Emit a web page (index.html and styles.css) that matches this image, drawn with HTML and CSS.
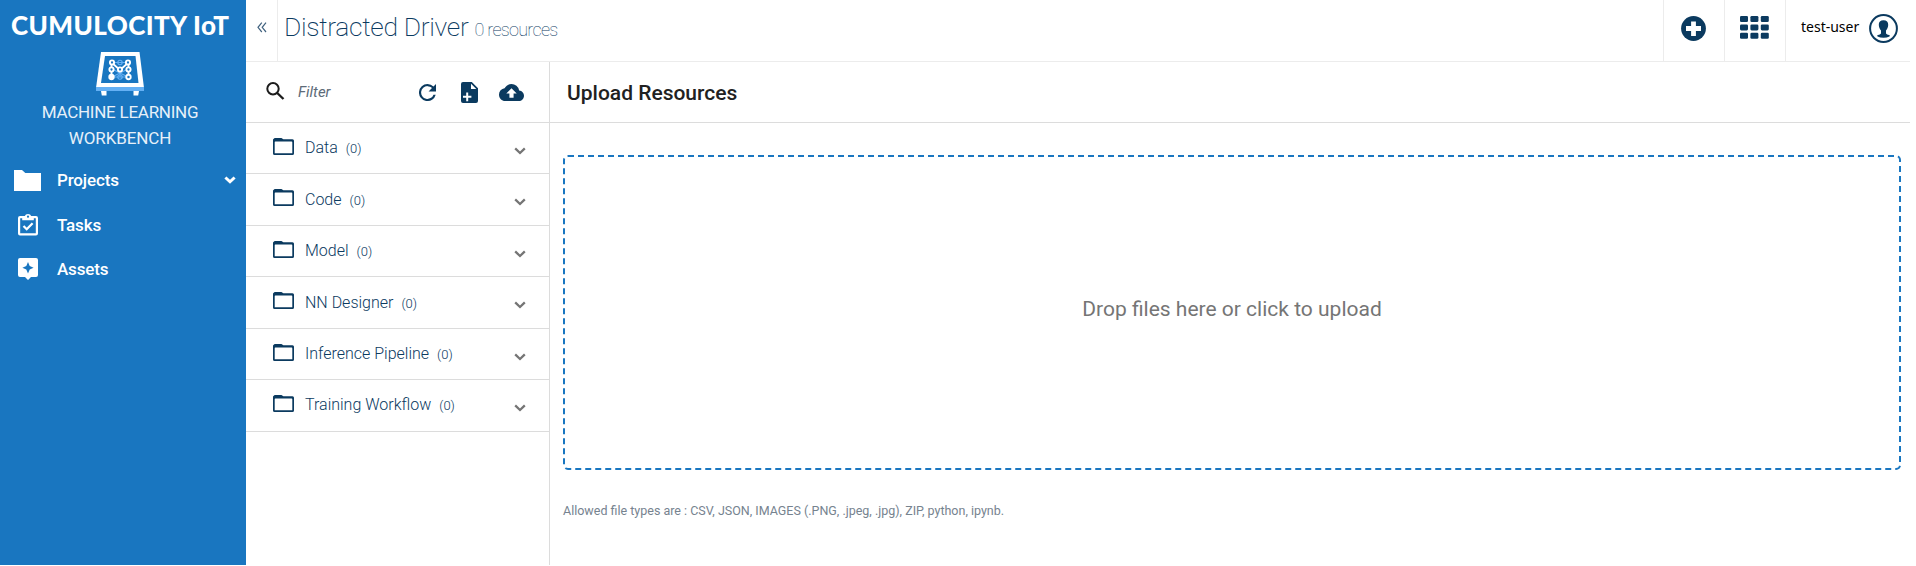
FILE: index.html
```html
<!DOCTYPE html>
<html lang="en">
<head>
<meta charset="utf-8">
<title>Machine Learning Workbench</title>
<link rel="stylesheet" href="styles.css">
</head>
<body>
<svg width="0" height="0" class="defs">
  <symbol id="folder" viewBox="0 0 21 17"><path d="M1 0.6Q1 0 2 0H8.4L10.4 1.2H19.5Q21 1.2 21 2.7V15.4Q21 17 19.4 17H1.6Q0 17 0 15.4V1.5ZM1.7 4.4V15.2H19.3V4.4Q19.3 3.6 18.6 3.6H2.3Q1.7 3.6 1.7 4.4Z" fill="currentColor" fill-rule="evenodd"/></symbol>
  <symbol id="chev" viewBox="0 0 12 8"><path d="M1.2 1.4L6 6L10.8 1.4" fill="none" stroke="currentColor" stroke-width="2.3"/></symbol>
  <symbol id="chev-bold" viewBox="0 0 12 8"><path d="M1.4 1.5L6 5.8L10.6 1.5" fill="none" stroke="currentColor" stroke-width="3"/></symbol>
</svg>
<div class="app">
  <aside class="sidebar">
    <div class="logo">CUMULOCITY IoT</div>
    <svg class="board" width="50" height="45" viewBox="0 0 50 45">
      <path d="M6 0H44.5L49 36H1Z" fill="#fff"/>
      <path d="M10 4H40.5L43.5 31H6Z" fill="#1976c0"/>
      <path d="M1 35H49V39H1Z" fill="#64b0f4"/>
      <path d="M6 39H11.5V43.5H6.8ZM38.5 39H44L43.2 43.5H38.5Z" fill="#fff"/>
      <g stroke="#64b0f4" stroke-width="1.1" fill="none"><path d="M17 10.5H33M17 17L33 25M33 17L17 25M17 25H33M25 17V25"/><circle cx="25" cy="10.5" r="2.2"/><circle cx="25" cy="25" r="2.2"/></g>
      <g stroke="#fff" stroke-width="1.9" fill="#1976c0"><path d="M16.5 24V10.5L25 18L33.5 10.5V24" fill="none"/><circle cx="17" cy="10.5" r="2.1"/><circle cx="33" cy="10.5" r="2.1"/><circle cx="16.5" cy="17.5" r="2.1"/><circle cx="25" cy="17.5" r="2.1"/><circle cx="33.5" cy="17.5" r="2.1"/><circle cx="33.5" cy="25" r="2.2"/><circle cx="16.5" cy="25" r="2.2" fill="#fff"/></g>
    </svg>
    <div class="product"><span class="wide">MACHINE LEARNING</span><br><span>WORKBENCH</span></div>
    <nav class="nav">
      <a class="item"><span class="ico"><svg width="27" height="21" viewBox="0 0 27 21"><path d="M0 0H8L11.3 3H27V21H0Z" fill="#fff"/></svg></span><span class="label">Projects</span><svg class="more" width="12" height="8"><use href="#chev-bold"/></svg></a>
      <a class="item"><span class="ico"><svg width="20" height="22" viewBox="0 0 20 22"><path d="M2 2H6.8Q7.5 0 10 0T13.2 2H18Q20 2 20 4V19.5Q20 21.5 18 21.5H2Q0 21.5 0 19.5V4Q0 2 2 2ZM2.2 4.2V19.3H17.8V4.2H15.8V6.3H4.2V4.2ZM10 1.6A1.1 1.1 0 1 0 10 3.8A1.1 1.1 0 1 0 10 1.6Z" fill="#fff" fill-rule="evenodd"/><path d="M5.5 12L8.7 15.2L14.6 9.2" stroke="#fff" stroke-width="2.3" fill="none"/></svg></span><span class="label">Tasks</span></a>
      <a class="item"><span class="ico"><svg width="20" height="22" viewBox="0 0 20 22"><path d="M2 0H18Q20 0 20 2V17Q20 19 18 19H13L10 22L7 19H2Q0 19 0 17V2Q0 0 2 0ZM10 4L8.3 8L4.4 9.7L8.3 11.4L10 15.4L11.7 11.4L15.6 9.7L11.7 8Z" fill="#fff" fill-rule="evenodd"/></svg></span><span class="label">Assets</span></a>
    </nav>
  </aside>
  <div class="main">
    <header class="header">
      <div class="collapse"><svg width="10" height="11" viewBox="0 0 10 11"><path d="M4.8 0.7L1 5.3L4.8 10M9 0.7L5.2 5.3L9 10" fill="none" stroke="#41627f" stroke-width="1.2"/></svg></div>
      <h1 class="title">Distracted Driver</h1><span class="count">0 resources</span>
      <div class="tool"><svg width="25" height="25" viewBox="0 0 25 25"><circle cx="12.5" cy="12.5" r="12.4" fill="#0b3a5f"/><path d="M10.1 5.5H14.9V10.1H20V14.9H14.9V20H10.1V14.9H5V10.1H10.1Z" fill="#fff"/></svg></div>
      <div class="tool grid"><svg width="29" height="23" viewBox="0 0 29 23" fill="#0b3a5f"><rect width="8" height="6" rx="1.3"/><rect x="10.4" width="8" height="6" rx="1.3"/><rect x="20.8" width="8" height="6" rx="1.3"/><rect y="8.4" width="8" height="6" rx="1.3"/><rect x="10.4" y="8.4" width="8" height="6" rx="1.3"/><rect x="20.8" y="8.4" width="8" height="6" rx="1.3"/><rect y="16.8" width="8" height="6" rx="1.3"/><rect x="10.4" y="16.8" width="8" height="6" rx="1.3"/><rect x="20.8" y="16.8" width="8" height="6" rx="1.3"/></svg></div>
      <div class="user"><span class="name">test-user</span><svg width="29" height="29" viewBox="0 0 29 29"><circle cx="14.5" cy="14.5" r="13.4" fill="none" stroke="#0b3a5f" stroke-width="2"/><path d="M14.5 6.2C17.6 6.2 19.4 8 19.2 11C19.1 13.8 18 15.3 17 16.6V19.4Q17.5 20.3 20.8 21.2L20.5 22.4Q17.8 23.7 14.5 23.7T8.5 22.4L8.2 21.2Q11.5 20.3 12 19.4V16.6C11 15.3 9.9 13.8 9.8 11C9.6 8 11.4 6.2 14.5 6.2Z" fill="#0b3a5f"/></svg></div>
    </header>
    <div class="body">
      <section class="panel">
        <div class="filter">
          <svg class="search" width="19" height="18" viewBox="0 0 19 18"><circle cx="7" cy="6.8" r="5.7" fill="none" stroke="#1c1c1c" stroke-width="2"/><path d="M11.2 11L17.5 17" stroke="#1c1c1c" stroke-width="2.4"/></svg>
          <span class="hint">Filter</span>
          <svg class="refresh" width="17" height="17" viewBox="4 4 16 16"><path fill="#0b3a5f" d="M17.65 6.35A7.95 7.95 0 0 0 12 4a8 8 0 1 0 7.73 10h-2.08A6 6 0 1 1 12 6c1.66 0 3.14.69 4.22 1.78L13 11h7V4z"/></svg>
          <svg class="newfile" width="17" height="21" viewBox="0 0 17 21"><path d="M2 0H10.8L17 6.2V19Q17 21 15 21H2Q0 21 0 19V2Q0 0 2 0ZM10 1.8V7H15.3ZM5.2 10.4V13.8H2V15.8H5.2V19.2H7.2V15.8H10.4V13.8H7.2V10.4Z" fill="#0b3a5f" fill-rule="evenodd"/></svg>
          <svg class="cloud" width="25" height="17" viewBox="0 4 24 16" preserveAspectRatio="none"><path d="M19.35 10.04A7.49 7.49 0 0 0 12 4C9.11 4 6.6 5.64 5.35 8.04A5.994 5.994 0 0 0 0 14c0 3.31 2.69 6 6 6h13c2.76 0 5-2.24 5-5 0-2.64-2.05-4.78-4.65-4.96zM14 13v4h-4v-4H7l5-5 5 5h-3z" fill="#0b3a5f"/></svg>
        </div>
        <div class="rows">
          <div class="row"><svg class="f" width="21" height="17"><use href="#folder"/></svg><span class="cat">Data</span><span class="num">(0)</span><svg class="c" width="12" height="8"><use href="#chev"/></svg></div>
          <div class="row low"><svg class="f" width="21" height="17"><use href="#folder"/></svg><span class="cat">Code</span><span class="num">(0)</span><svg class="c" width="12" height="8"><use href="#chev"/></svg></div>
          <div class="row"><svg class="f" width="21" height="17"><use href="#folder"/></svg><span class="cat">Model</span><span class="num">(0)</span><svg class="c" width="12" height="8"><use href="#chev"/></svg></div>
          <div class="row low"><svg class="f" width="21" height="17"><use href="#folder"/></svg><span class="cat">NN Designer</span><span class="num">(0)</span><svg class="c" width="12" height="8"><use href="#chev"/></svg></div>
          <div class="row"><svg class="f" width="21" height="17"><use href="#folder"/></svg><span class="cat">Inference Pipeline</span><span class="num">(0)</span><svg class="c" width="12" height="8"><use href="#chev"/></svg></div>
          <div class="row"><svg class="f" width="21" height="17"><use href="#folder"/></svg><span class="cat">Training Workflow</span><span class="num">(0)</span><svg class="c" width="12" height="8"><use href="#chev"/></svg></div>
        </div>
      </section>
      <section class="content">
        <h2 class="heading">Upload Resources</h2>
        <div class="drop"><span>Drop files here or click to upload</span></div>
        <p class="allowed">Allowed file types are : CSV, JSON, IMAGES (.PNG, .jpeg, .jpg), ZIP, python, ipynb.</p>
      </section>
    </div>
  </div>
</div>
</body>
</html>
```
FILE: styles.css
```css
* { box-sizing: border-box; }
body { margin: 0; background: #fff; font-family: Roboto, sans-serif; overflow: hidden; }
svg { display: block; flex: none; }
.defs { position: absolute; }
.app { display: flex; width: 1910px; height: 565px; }

.sidebar { width: 246px; background: #1976c0; color: #fff; display: flex; flex-direction: column; }
.logo { padding: 9px 0 0 11px; font: 900 26px/32px Lato, sans-serif; height: 52px; white-space: nowrap; letter-spacing: 0.4px; }
.board { margin-left: 95px; }
.product { margin-top: 2px; padding-right: 6px; text-align: center; font-size: 17px; line-height: 26px; font-weight: 400; color: #e6f0f9; white-space: nowrap; letter-spacing: -0.1px; }
.wide { letter-spacing: -0.25px; }
.nav { padding-top: 7px; }
.item { display: flex; align-items: center; height: 44.5px; padding-right: 10px; }
.ico { width: 27px; margin: 0 16px 0 14px; display: flex; justify-content: center; }
.label { font-size: 17px; font-weight: 500; line-height: 20px; letter-spacing: -0.15px; }
.more { margin-left: auto; }

.main { flex: 1; display: flex; flex-direction: column; min-width: 0; }
.header { display: flex; height: 62px; border-bottom: 1px solid #ececec; color: #0b3a5f; }
.collapse { width: 32px; border-right: 1px solid #ececec; padding: 22px 0 0 11px; }
.title { margin: 0 0 0 6px; font-size: 26.5px; line-height: 54px; font-weight: 200; white-space: nowrap; letter-spacing: -0.35px; }
.count { margin-left: 6px; font-size: 18px; line-height: 60px; font-weight: 250; white-space: nowrap; letter-spacing: -0.7px; }
.tool { width: 61px; border-left: 1px solid #ececec; padding: 16px 0 0 17px; }
.count + .tool { margin-left: auto; }
.tool.grid { padding-left: 15px; }
.user { width: 125px; border-left: 1px solid #ececec; padding-left: 15px; display: flex; }
.name { width: 68px; font: 14px/53px "Noto Sans", sans-serif; color: #000; white-space: nowrap; }
.user svg { margin-top: 14px; }

.body { flex: 1; display: flex; }
.panel { width: 304px; border-right: 1px solid #dcdcdc; }
.filter { height: 61px; border-bottom: 1px solid #dcdcdc; padding: 20px 0 0 20px; display: flex; }
.hint { width: 121px; margin-left: 13px; font-size: 15px; line-height: 21px; font-style: italic; color: #5d6b78; }
.refresh { margin: 2px 0 0; }
.newfile { margin-left: 25px; }
.cloud { margin: 2px 0 0 21px; }
.rows { display: grid; grid-template-rows: 51px 52px 51px 52px 51px 52px; }
.row { display: flex; border-bottom: 1px solid #dcdcdc; padding: 0 23px 0 27px; color: #0b3a5f; white-space: nowrap; }
.f { margin-top: 15px; }
.cat { margin-left: 11px; font-size: 16px; line-height: 50px; font-weight: 300; }
.num { margin-left: 8px; font-size: 13px; line-height: 52px; font-weight: 300; }
.low .cat { line-height: 52px; }
.low .num { line-height: 54px; }
.c { margin: 24px 0 0 auto; color: #757575; }

.content { flex: 1; min-width: 0; }
.heading { margin: 0; height: 61px; border-bottom: 1px solid #dcdcdc; padding-left: 17px; font-size: 21px; line-height: 62px; font-weight: 500; color: #212121; }
.drop { margin: 32px 9px 0 13px; height: 315px; border: 2px dashed #1976c0; border-radius: 5px; display: flex; align-items: center; justify-content: center; font-size: 21px; color: #757575; padding-bottom: 8px; }
.allowed { margin: 33px 0 0 13px; font-size: 12.5px; line-height: 16px; color: #76838f; }
```
